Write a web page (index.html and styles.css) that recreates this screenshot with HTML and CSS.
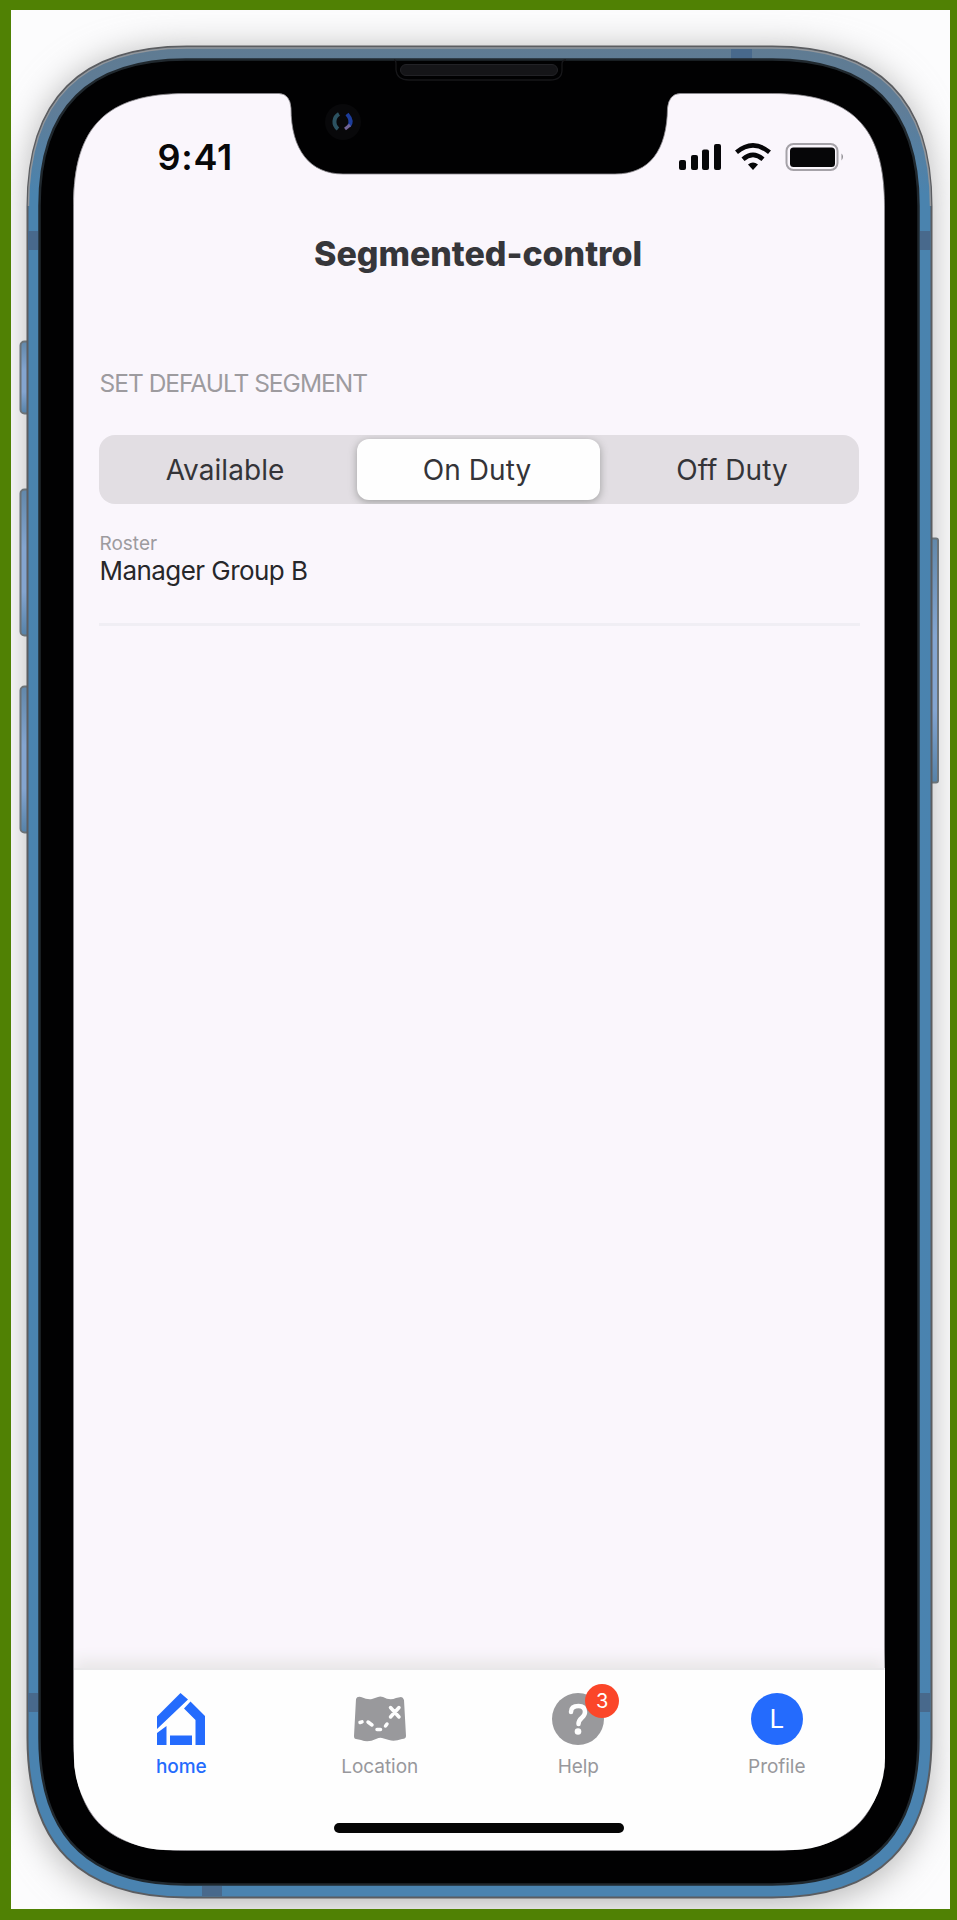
FILE: index.html
```html
<!DOCTYPE html>
<html lang="en">
<head>
<meta charset="utf-8">
<title>Segmented-control</title>
<link rel="stylesheet" href="styles.css">
</head>
<body>
<div class="stage">
  <svg class="chassis" viewBox="0 0 957 1920" aria-hidden="true">
    <defs>
      <linearGradient id="rail" x1="0" y1="0" x2="0" y2="1"><stop offset="0" stop-color="#5f7b92"/><stop offset=".035" stop-color="#5f7d98"/><stop offset=".08" stop-color="#4a83ae"/><stop offset="1" stop-color="#4a83b0"/></linearGradient>
      <linearGradient id="key" x1="0" y1="0" x2="0" y2="1"><stop offset="0" stop-color="#6288aa"/><stop offset=".4" stop-color="#84a5d0"/><stop offset=".7" stop-color="#84a5d0"/><stop offset="1" stop-color="#5682a8"/></linearGradient>
      <filter id="soft" x="-20%" y="-20%" width="140%" height="140%"><feGaussianBlur stdDeviation="17"/></filter>
    </defs>
    <path class="shade" filter="url(#soft)" d="M27 206C27 99 80 48 187 48H772C879 48 932 99 932 206V1746C932 1853 879 1906 772 1906H187C80 1906 27 1853 27 1746Z"/>
    <g class="keys">
      <rect x="20.500" y="341.500" width="12" height="72" rx="4"/>
      <rect x="20.500" y="489.500" width="12" height="146" rx="4"/>
      <rect x="20.500" y="686.500" width="12" height="146" rx="4"/>
      <rect x="926" y="538.500" width="12" height="244" rx="2"/>
    </g>
    <path class="rail" d="M27.500 206C27.500 99 80 46.500 187 46.500H772C879 46.500 931.500 99 931.500 206V1738C931.500 1845 879 1897.500 772 1897.500H187C80 1897.500 27.500 1845 27.500 1738Z"/>
    <path class="rim" d="M28.500 206C28.500 100 81 48 187 48H772C878 48 930.500 100 930.500 206"/>
    <path class="band" d="M731 49h21v10h-21zM28 231h10v19H28zM920 231h10v19h-10zM28 1693h10v19H28zM920 1693h10v19h-10zM202 1886h20v10h-20z"/>
    <path class="bezel" d="M39.500 206C39.500 108 88 59.500 186 59.500H772C870 59.500 918.500 108 918.500 206V1738C918.500 1836 870 1884.500 772 1884.500H186C88 1884.500 39.500 1836 39.500 1738Z"/>
    <path class="glass" d="M73.500 205.500C73.500 126.500 106.500 93.500 185.500 93.500H279Q290 94 291 108C291 150 310 174 343 174H615C650 174 667 150 667.500 108Q669 94 680 93.500H772.500C851.500 93.500 884.500 126.500 884.500 205.500V1738.500C884.500 1817.500 851.500 1850.500 772.500 1850.500H185.500C106.500 1850.500 73.500 1817.500 73.500 1738.500Z"/>
    <path class="slot" d="M394 60Q396 60 396 64V70Q397 80 409 80H550Q562 80 562 70V64Q562 60 566 60"/>
    <rect class="speaker" x="400.500" y="64.500" width="157" height="11" rx="5.500"/>
    <circle cx="343" cy="122" r="18" fill="#08080a"/>
    <path d="M339 114a9 9 0 0 0-1 15" fill="none" stroke="#2c5261" stroke-width="4"/>
    <path d="M347 114q6 7 2 12" fill="none" stroke="#1d3d9b" stroke-width="4"/>
    <path d="M345 129l5-4" fill="none" stroke="#716497" stroke-width="3"/>
  </svg>
  <main class="screen">
    <header class="status">
      <time class="clock">9:41</time>
      <svg class="indicators" width="166" height="30" viewBox="0 0 166 30" aria-hidden="true">
        <rect x="0" y="18" width="7" height="10" rx="2"/><rect x="12" y="13" width="7" height="15" rx="2"/><rect x="23" y="7.500" width="7" height="20.500" rx="2"/><rect x="35" y="2" width="7" height="26" rx="2"/>
        <g fill="none" stroke="#060608"><path d="M57.500 10.300Q74 -3.500 90.500 10.300" stroke-width="4.600"/><path d="M64 17.200Q74 8.500 84 17.200" stroke-width="4.600"/></g>
        <path d="M69 22.500Q74 18.500 79 22.500L74 28Z"/>
        <rect class="cell" x="107.500" y="2" width="51" height="26" rx="7"/><rect x="111" y="5.500" width="45" height="19.500" rx="3.500"/><path d="M162.500 11.500q3 3 0 7z" fill="#8d8b90"/>
      </svg>
    </header>
    <h1 class="title">Segmented-control</h1>
    <section class="content">
      <h2 class="eyebrow">SET DEFAULT SEGMENT</h2>
      <div class="segments">
        <button class="segment available">Available</button>
        <button class="segment selected">On Duty</button>
        <button class="segment off">Off Duty</button>
      </div>
      <div class="field">
        <div class="field-label">Roster</div>
        <div class="field-value">Manager Group B</div>
      </div>
    </section>
    <nav class="tabs">
      <a class="tab active">
        <svg class="icon" viewBox="0 0 54 54"><path d="M26.500 1L34 7.500L3 37V24.500ZM36.500 9.500L51 24V53H41.500V28L30 16.500ZM3 41L12.500 34V53H3ZM16 43.500H38V53H16Z"/></svg>
        <span class="tab-text t-home">home</span>
      </a>
      <a class="tab">
        <svg class="icon" viewBox="0 0 54 54"><path d="M3 7Q4 4 8 5Q15 8 19 7L25 5Q27 4 30 5Q37 9 43 6L48 5Q50 5 51 8L53 44Q53 47 49 47Q41 50 36 48L29 46Q27 45 23 47Q15 51 8 48L3 47Q1 47 1 44Z"/><path class="mark" d="M37.500 15.500L46 25M46 15.500L37.500 25M7 30.500L9 29.800M15 30L19 33M24 37.500H27.500M32.500 34L34 32"/></svg>
        <span class="tab-text t-location">Location</span>
      </a>
      <a class="tab">
        <span class="icon-wrap">
          <svg class="icon" viewBox="0 0 54 54"><circle cx="27" cy="27" r="26"/><path class="ask" d="M20 20Q20 14 27.500 14Q34 14 34 20C34 26 27.500 25.500 27.500 32"/><circle cx="27" cy="39.500" r="3.300" fill="#fefefe"/></svg>
          <b class="badge">3</b>
        </span>
        <span class="tab-text t-help">Help</span>
      </a>
      <a class="tab">
        <span class="avatar">L</span>
        <span class="tab-text t-profile">Profile</span>
      </a>
      <i class="home-bar"></i>
    </nav>
  </main>
</div>
</body>
</html>
```
FILE: styles.css
```css
* { box-sizing: border-box; }
body { margin: 0; background: #508104; font-family: Inter, "Liberation Sans", sans-serif; }
.stage { position: relative; width: 957px; height: 1920px; overflow: hidden; border: solid #508104; border-width: 10.5px 7px 11px 11px; background: #fcfcfd; padding: 83px 65.5px 58.5px 62.5px; }
.chassis { position: absolute; left: -11px; top: -10px; width: 957px; height: 1920px; }
.shade { fill: #b8b8b8; }
.rail { fill: url(#rail); stroke: #5b5d61; stroke-width: 2; }
.rim { fill: none; stroke: #92969b; stroke-width: 1.5; }
.keys rect { fill: url(#key); stroke: #6b7378; stroke-width: 2; }
.band { fill: #48698c; }
.bezel { fill: #010102; stroke: #20282e; stroke-width: 2.5; }
.glass { fill: #faf6fc; stroke: #8e8c90; stroke-width: .8; }
.slot { fill: none; stroke: #17171a; stroke-width: 1.3; }
.speaker { fill: #151518; stroke: #222226; }
.screen { position: relative; display: flex; flex-direction: column; width: 811px; height: 1757px; border-radius: 0 0 92px 92px; overflow: hidden; }
.status { display: flex; justify-content: space-between; padding: 49px 40px 0 84px; height: 136px; }
.clock { font-size: 36px; line-height: 31px; font-weight: 570; letter-spacing: .7px; color: #080809; }
.indicators { fill: #060608; margin-top: 0; }
.cell { fill: none; stroke: #a5a2a8; stroke-width: 2; }
.title { margin: 0 2px 0 0; text-align: center; font-size: 34px; line-height: 50px; font-weight: 800; letter-spacing: -.05px; color: #36363a; }
.content { flex: 1; padding: 89px 25px 0 25px; }
.eyebrow { margin: 0 0 37px 1px; font-size: 24.500px; line-height: 30px; height: 30px; font-weight: 400; letter-spacing: -1px; color: #9d9b9f; white-space: nowrap; }
.segments { display: flex; width: 760px; height: 69px; margin: 0; padding: 4px; border-radius: 16px; background: #e2dee3; overflow: hidden; }
.segment { flex: 1; border: 0; padding: 0; background: none; color: #343438; font: 440 28px/60px Inter, sans-serif; letter-spacing: .05px; }
.available { padding-right: 9px; }
.off { padding-left: 10px; }
.selected { flex: 0 0 243px; padding-right: 2px; border-radius: 12px; background: #fefefe; box-shadow: 0 2px 9px #9c9c9c; }
.field { width: 761px; height: 122px; padding-top: 29px; border-bottom: 3px solid #f0eef4; }
.field-label { margin-left: 1px; font-size: 19px; line-height: 22px; color: #9d9b9f; }
.field-value { margin-left: 1px; font-size: 26px; line-height: 31px; letter-spacing: -.55px; color: #27272a; }
.tabs { position: relative; display: grid; grid-template-columns: repeat(4, 198.500px); padding: 22px 0 0 8.500px; height: 182px; background: #fefefe; border-top: 2px solid #e9e8ea; box-shadow: 0 -8px 14px #e9e7e8; }
.tab { display: flex; flex-direction: column; align-items: center; gap: 9px; color: #98989c; }
.tab.active { color: #246bfd; }
.icon { display: block; width: 54px; height: 54px; fill: #99999c; }
.active .icon { fill: #246bfd; }
.icon-wrap { position: relative; }
.mark, .ask { fill: none; stroke: #fefefe; stroke-width: 3.500; stroke-linecap: round; }
.ask { stroke-width: 4.500; }
.badge { position: absolute; left: 34px; top: -8px; width: 34px; height: 34px; border-radius: 50%; background: #fb4629; color: #fff; text-align: center; font-size: 20px; line-height: 35px; font-weight: 400; }
.avatar { width: 52px; height: 52px; margin: 1px; border-radius: 50%; background: #246bfd; color: #fff; text-align: center; font-size: 26px; line-height: 52px; }
.tab-text { font-size: 19px; line-height: 24px; letter-spacing: -.05px; }
.t-home { font-weight: 450; }
.home-bar { position: absolute; left: 260.500px; bottom: 17px; width: 290px; height: 10.500px; border-radius: 6px; background: #050505; }
```
